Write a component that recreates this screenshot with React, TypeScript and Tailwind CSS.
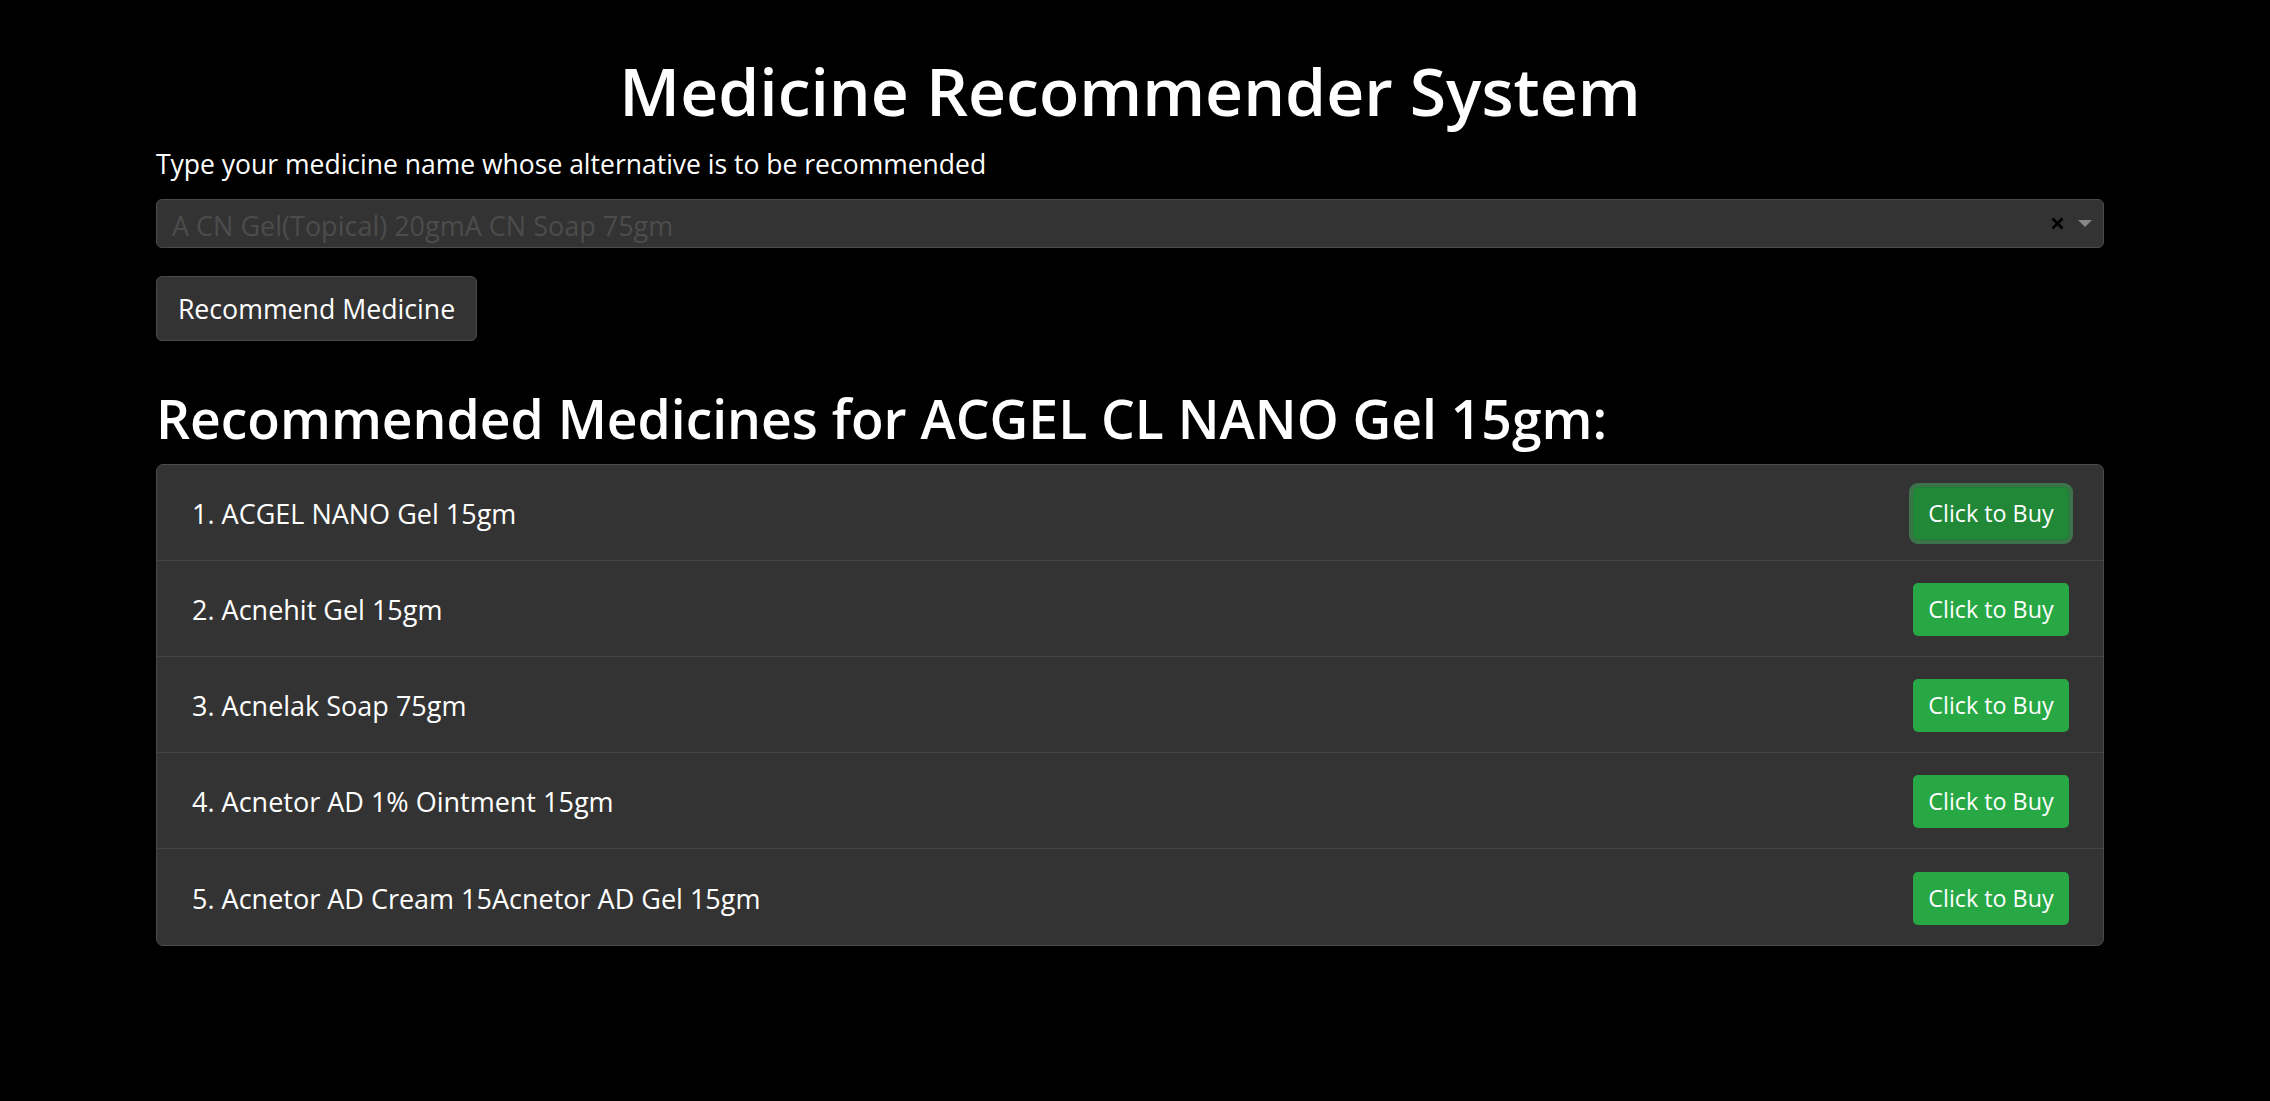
import React from "react";

const medicines = [
    "ACGEL NANO Gel 15gm",
    "Acnehit Gel 15gm",
    "Acnelak Soap 75gm",
    "Acnetor AD 1% Ointment 15gm",
    "Acnetor AD Cream 15Acnetor AD Gel 15gm",
];

const App = () => {
    return (
        <div className="min-h-screen bg-black text-white font-['Open_Sans',sans-serif]">
            <div className="w-[1948px] ml-[156px] pt-[50px]">
                <h1 className="text-center text-[66px] font-semibold leading-[80px]">
                    Medicine Recommender System
                </h1>
                <label className="block mt-[15px] text-[26.5px] leading-[38px]">
                    Type your medicine name whose alternative is to be recommended
                </label>
                <div className="flex items-center h-[49px] mt-[16px] pl-[15px] pr-[11px] rounded-[6px] bg-[#333] border border-[#4a4a4a]">
                    <div className="grow pt-[5px] text-[27px] text-[#4c4c4c] truncate">
                        A CN Gel(Topical) 20gmA CN Soap 75gm
                    </div>
                    <svg width="13" height="13" viewBox="0 0 13 13" className="mr-[14px]">
                        <path d="M1.5 1.5l10 10M11.5 1.5l-10 10" stroke="#000" strokeWidth="2.6" />
                    </svg>
                    <svg width="14" height="8" viewBox="0 0 14 8">
                        <path d="M0 0h14L7 7z" fill="#888" />
                    </svg>
                </div>
                <button className="flex items-center justify-center w-[321px] h-[65px] mt-[28px] pt-[2px] rounded-[6px] bg-[#333] border border-[#4a4a4a] text-[26.7px]">
                    Recommend Medicine
                </button>
                <h2 className="mt-[46px] text-[53.4px] font-semibold leading-[64px]">
                    Recommended Medicines for ACGEL CL NANO Gel 15gm:
                </h2>
                <div className="mt-[13px] rounded-[7px] bg-[#333] border border-[#4a4a4a] overflow-hidden">
                    {medicines.map((name, i) => (
                        <div
                            key={name}
                            className="flex items-center justify-between h-[96px] pl-[35px] pr-[34px] border-b border-[#444] last:border-b-0"
                        >
                            <span className="pt-[4px] text-[27px]">
                                {i + 1}. {name}
                            </span>
                            {i === 0 ? (
                                <button className="flex items-center justify-center w-[156px] h-[53px] mt-[2px] rounded-[5px] bg-[#218838] border border-[#1e7e34] shadow-[0_0_0_4px_rgba(72,180,97,0.5)] text-[23.3px]">
                                    Click to Buy
                                </button>
                            ) : (
                                <button className="flex items-center justify-center w-[156px] h-[53px] mt-[2px] rounded-[5px] bg-[#28a745] text-[23.3px]">
                                    Click to Buy
                                </button>
                            )}
                        </div>
                    ))}
                </div>
            </div>
        </div>
    );
};

export default App;
